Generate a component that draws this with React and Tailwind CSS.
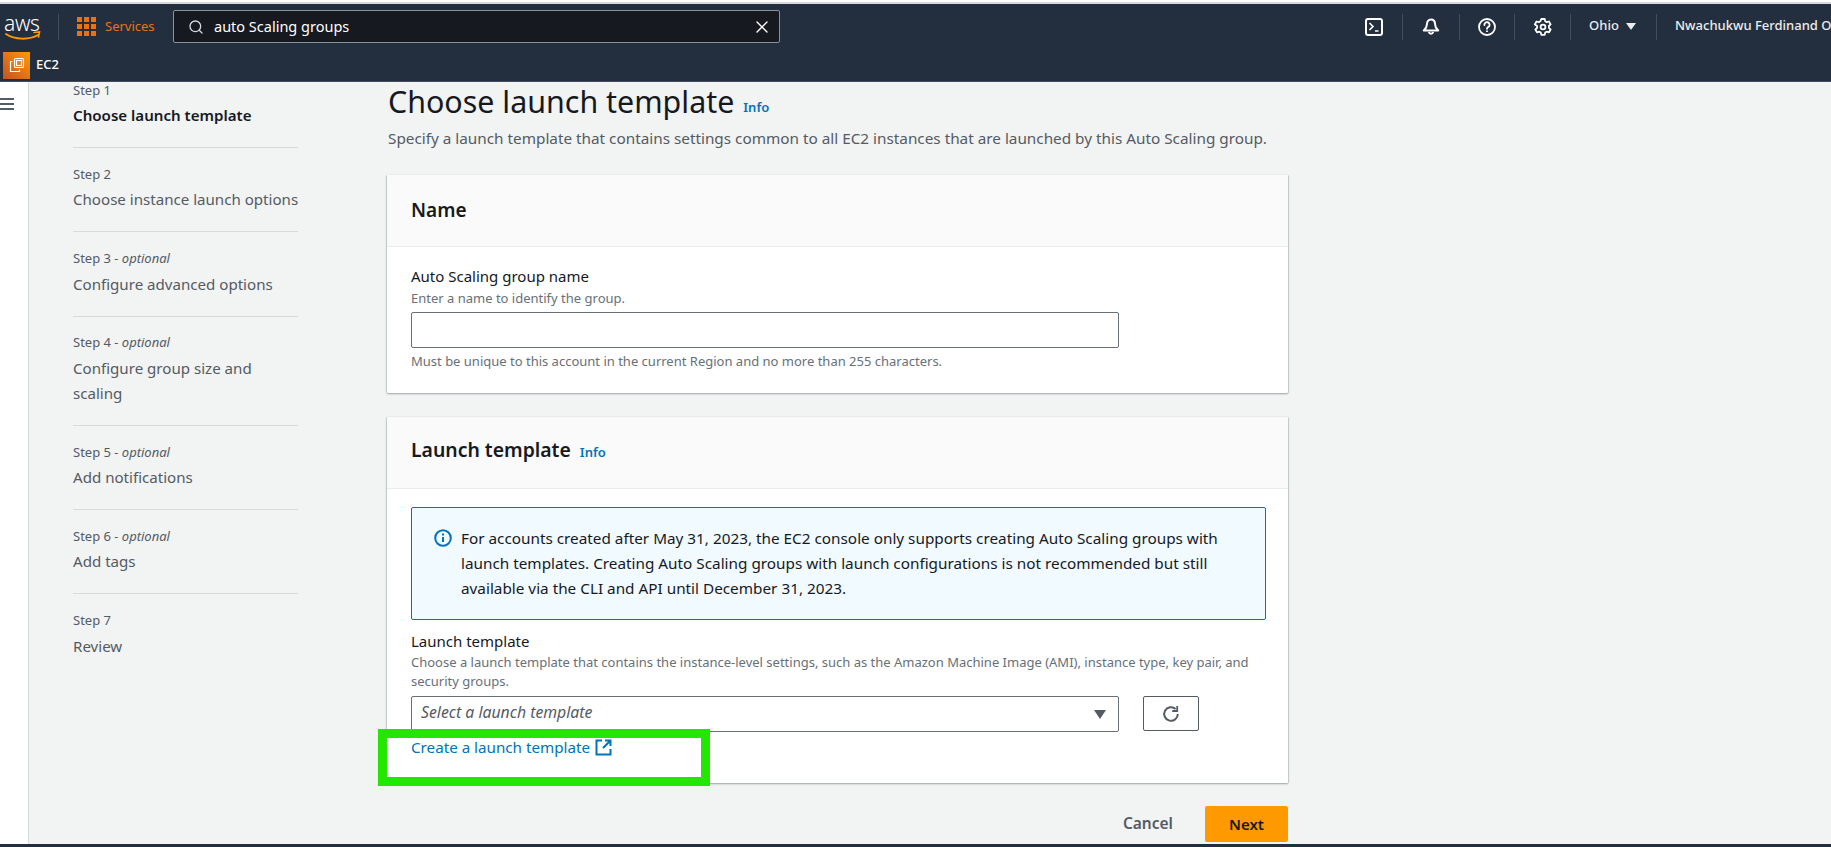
import { Search, X } from "lucide-react";

const FONT = "font-['Noto_Sans','Open_Sans',sans-serif]";

const steps = [
  { step: "Step 1", title: ["Choose launch template"], active: true },
  { step: "Step 2", title: ["Choose instance launch options"] },
  { step: "Step 3", optional: true, title: ["Configure advanced options"] },
  { step: "Step 4", optional: true, title: ["Configure group size and", "scaling"] },
  { step: "Step 5", optional: true, title: ["Add notifications"] },
  { step: "Step 6", optional: true, title: ["Add tags"] },
  { step: "Step 7", title: ["Review"], last: true },
];

function Divider() {
  return <div className="h-[26px] w-px bg-[#414d5c]" />;
}

function AwsLogo() {
  return (
    <div className="relative h-[30px] w-[40px]">
      <span className="ml-[2px] block text-[21px] font-light leading-[22px] tracking-[-0.3px] text-white">aws</span>
      <svg className="absolute left-[2px] top-[17px]" width="38" height="14" viewBox="0 0 38 14" fill="none">
        <path d="M2 5c9 6 23 6 32 1" stroke="#ff9900" strokeWidth="2" strokeLinecap="round" />
        <path d="M30 3.5l5.5-.5-1 5" stroke="#ff9900" strokeWidth="1.6" strokeLinecap="round" />
      </svg>
    </div>
  );
}

function ServicesGrid() {
  return (
    <div className="grid grid-cols-3 gap-[2px]">
      {[0, 1, 2, 3, 4, 5, 6, 7, 8].map((i) => (
        <div key={i} className="h-[5px] w-[5px] bg-[#ec7211]" />
      ))}
    </div>
  );
}

function HeaderIcons() {
  return (
    <div className="flex items-center text-white">
      <div className="flex w-[56px] justify-center">
        <svg width="18" height="18" viewBox="0 0 18 18" fill="none" stroke="currentColor" strokeWidth="2">
          <rect x="1" y="1" width="16" height="16" rx="2" />
          <path d="M4.5 5l3.5 3.5-3.5 3.5M10 13h3.5" strokeWidth="1.6" />
        </svg>
      </div>
      <Divider />
      <div className="flex w-[56px] justify-center">
        <svg width="18" height="18" viewBox="0 0 18 18" fill="none" stroke="currentColor" strokeWidth="2" strokeLinejoin="round">
          <path d="M9 1.5c-2.6 0-4 2-4 4.5 0 3-1.2 4.5-3.2 6.5h14.4c-2-2-3.2-3.5-3.2-6.5 0-2.5-1.4-4.5-4-4.5z" />
          <path d="M6.8 14a2.3 2.3 0 004.4 0" />
        </svg>
      </div>
      <Divider />
      <div className="flex w-[54px] justify-center">
        <svg width="18" height="18" viewBox="0 0 18 18" fill="none" stroke="currentColor" strokeWidth="1.8">
          <circle cx="9" cy="9" r="8" />
          <path d="M6.4 7a2.6 2.6 0 115 .8c-.4 1-2.4 1.3-2.4 3" strokeLinecap="round" />
          <path d="M9 12.6v1.4" />
        </svg>
      </div>
      <Divider />
      <div className="flex w-[55px] justify-center">
        <svg width="18" height="18" viewBox="0 0 18 18" fill="none" stroke="currentColor" strokeWidth="1.8" strokeLinejoin="round">
          <path d="M7.3 1h3.4l.5 2.3 1.5.9 2.3-.7 1.6 2.9-1.7 1.6v1.9l1.7 1.6-1.6 2.9-2.3-.7-1.5.9-.5 2.3H7.3l-.5-2.3-1.5-.9-2.3.7-1.6-2.9 1.7-1.6V8L.9 6.4l1.6-2.9 2.3.7 1.5-.9z" />
          <circle cx="9" cy="9" r="2.4" />
        </svg>
      </div>
      <Divider />
      <div className="flex w-[85px] items-center justify-center gap-[7px] pb-[2px] pr-[2px] text-[13px] font-medium text-[#eaeded]">
        <span>Ohio</span>
        <span className="mt-[2px] h-0 w-0 border-x-[5px] border-t-[7px] border-x-transparent border-t-[#eaeded]" />
      </div>
      <Divider />
    </div>
  );
}

function TopNav() {
  return (
    <header className="h-[78px] shrink-0 border-b border-[#414d5c] bg-[#232f3e]">
      <div className="flex h-[45px] items-center">
        <div className="ml-[2px] flex w-[56px] shrink-0 justify-start">
          <AwsLogo />
        </div>
        <div className="h-[26px] w-px shrink-0 bg-[#414d5c]" />
        <div className="ml-[18px] flex w-[96px] shrink-0 items-center gap-[9px]">
          <ServicesGrid />
          <span className="text-[13px] text-[#ec7211]">Services</span>
        </div>
        <div className="flex h-[33px] w-[607px] shrink-0 items-center rounded-[2px] border border-[#879596] bg-[#16191f] pl-[14px] pr-[7px] text-white">
          <Search size={16} strokeWidth={2} className="text-[#d5dbdb]" />
          <span className="ml-[10px] flex-1 text-[14.5px]">auto Scaling groups</span>
          <X size={20} strokeWidth={1.6} />
        </div>
        <div className="flex flex-1 items-center justify-end overflow-hidden">
          <HeaderIcons />
          <span className="ml-[18px] w-[156px] shrink-0 overflow-hidden whitespace-nowrap pb-[2px] text-[13px] font-medium text-[#eaeded]">
            Nwachukwu Ferdinand On
          </span>
        </div>
      </div>
      <div className="flex h-[32px] items-center pl-[3px]">
        <div className="flex h-[27px] w-[27px] items-center justify-center bg-linear-to-tr from-[#c8511b] to-[#ff9900]">
          <svg width="20" height="20" viewBox="0 0 20 20" fill="none" stroke="white" strokeWidth="1.2">
            <rect x="7.5" y="3.5" width="9" height="9" rx="1" />
            <rect x="9.5" y="5.5" width="5" height="5" />
            <path d="M5.5 6.5H3.5v10h9v-2" />
          </svg>
        </div>
        <span className="ml-[6px] text-[13px] font-medium text-white">EC2</span>
      </div>
    </header>
  );
}

function StepList() {
  return (
    <nav className="ml-[44px] mt-[-0.5px] w-[225px] shrink-0">
      {steps.map((s) => (
        <div key={s.step} className={s.last ? "" : "mb-[17.8px] border-b border-[#d5dbdb] pb-[19px]"}>
          <div className="text-[13px] leading-[16px] text-[#545b64]">
            {s.step}
            {s.optional && <i> - optional</i>}
          </div>
          <div className={`mt-[5.5px] whitespace-nowrap text-[15.1px] leading-[25px] ${s.active ? "font-semibold text-[#16191f]" : "text-[#545b64]"}`}>
            {s.title.map((line) => (
              <div key={line}>{line}</div>
            ))}
          </div>
        </div>
      ))}
    </nav>
  );
}

function Card({ header, children }) {
  return (
    <section className="w-[901px] rounded-[1px] bg-white shadow-[0_1px_2px_rgba(0,28,36,0.35),1px_0_1px_rgba(0,28,36,0.12),-1px_0_1px_rgba(0,28,36,0.12)]">
      <div className="flex h-[72px] items-center border-b border-[#eaeded] bg-[#fafafa] px-[24px]">{header}</div>
      {children}
    </section>
  );
}

function Main() {
  return (
    <main className="ml-[89px] w-[901px] shrink-0">
      <div className="flex items-end pt-[2px]">
        <h1 className="pl-[1px] text-[30.4px] leading-[36px] text-[#16191f]">Choose launch template</h1>
        <span className="mb-[3px] ml-[9px] text-[13px] font-semibold text-[#0073bb]">Info</span>
      </div>
      <p className="mt-[7px] whitespace-nowrap pl-[1px] text-[15.3px] leading-[22px] text-[#545b64]">
        Specify a launch template that contains settings common to all EC2 instances that are launched by this Auto Scaling group.
      </p>

      <div className="mt-[26px] flex flex-col gap-[24px]">
        <Card header={<h2 className="pb-[1px] text-[19px] font-semibold text-[#16191f]">Name</h2>}>
          <div className="h-[146px] px-[24px] pt-[19px]">
            <div className="text-[15px] leading-[20px] text-[#16191f]">Auto Scaling group name</div>
            <div className="mt-[3px] text-[13px] leading-[18px] text-[#687078]">Enter a name to identify the group.</div>
            <div className="mt-[5px] h-[36px] w-[708px] rounded-[2px] border border-[#687078] bg-white" />
            <div className="mt-[4px] text-[13px] leading-[18px] text-[#687078]">
              Must be unique to this account in the current Region and no more than 255 characters.
            </div>
          </div>
        </Card>

        <Card
          header={
            <div className="flex items-baseline pb-[5px]">
              <h2 className="text-[19.4px] font-semibold text-[#16191f]">Launch template</h2>
              <span className="ml-[9px] text-[13px] font-semibold text-[#0073bb]">Info</span>
            </div>
          }
        >
          <div className="h-[294px] px-[24px] pt-[18px]">
            <div className="flex h-[113px] w-[855px] gap-[9px] rounded-[2px] border border-[#0073bb] bg-[#f1faff] pl-[22px] pt-[18px]">
              <svg className="mt-[3px] shrink-0" width="18" height="18" viewBox="0 0 18 18" fill="none" stroke="#0073bb" strokeWidth="2">
                <circle cx="9" cy="9" r="7.8" />
                <path d="M9 8v5M9 4.6v2" />
              </svg>
              <p className="w-[790px] text-[15.3px] leading-[25px] text-[#16191f]">
                For accounts created after May 31, 2023, the EC2 console only supports creating Auto Scaling groups with launch templates. Creating Auto Scaling groups with launch configurations is not recommended but still available via the CLI and API until December 31, 2023.
              </p>
            </div>
            <div className="mt-[11px] text-[15px] leading-[20px] text-[#16191f]">Launch template</div>
            <div className="mt-[2px] text-[13px] leading-[18.5px] text-[#687078]">
              Choose a launch template that contains the instance-level settings, such as the Amazon Machine Image (AMI), instance type, key pair, and security groups.
            </div>
            <div className="mt-[6px] flex gap-[24px]">
              <div className="flex h-[36px] w-[708px] items-center justify-between rounded-[2px] border border-[#687078] bg-white pl-[9px] pr-[12px]">
                <i className="pb-[2px] text-[15.8px] text-[#545b64]">Select a launch template</i>
                <span className="h-0 w-0 border-x-[6px] border-t-[9px] border-x-transparent border-t-[#545b64]" />
              </div>
              <div className="flex h-[35px] w-[56px] items-center justify-center rounded-[2px] border border-[#545b64] bg-white">
                <svg width="18" height="18" viewBox="0 0 18 18" fill="none" stroke="#545b64" strokeWidth="2">
                  <path d="M15.8 9a6.8 6.8 0 11-2.2-5" />
                  <path d="M15.2 1v5h-5" strokeWidth="1.8" />
                </svg>
              </div>
            </div>
            <div className="mt-[5px] flex items-center gap-[5px] text-[15.2px] leading-[20px] text-[#0073bb]">
              <span>Create a launch template</span>
              <svg width="17" height="17" viewBox="0 0 17 17" fill="none" stroke="currentColor" strokeWidth="2">
                <path d="M7 1.5H1.5v14h14V10" />
                <path d="M10 1.5h5.5V7M15.5 1.5L8 9" />
              </svg>
            </div>
          </div>
        </Card>
      </div>

      <div className="mt-[23px] flex items-center justify-end">
        <span className="mr-[32px] text-[15.5px] font-semibold text-[#545b64]">Cancel</span>
        <div className="flex h-[36px] w-[83px] items-center justify-center rounded-[2px] bg-[#ff9900] text-[15px] font-semibold text-[#16191f]">Next</div>
      </div>
    </main>
  );
}

export default function App() {
  return (
    <div className={`${FONT} relative flex h-[847px] flex-col overflow-hidden bg-[#f2f3f3]`}>
      <div className="h-[4px] shrink-0 border-b-2 border-[#d8d8d8] bg-white" />
      <TopNav />
      <div className="flex min-h-0 flex-1">
        <div className="w-[29px] shrink-0 border-r border-[#d5dbdb] bg-white">
          <svg className="mt-[15px]" width="16" height="14" viewBox="0 0 16 14" fill="none" stroke="#545b64" strokeWidth="2">
            <path d="M0 2h14M0 7h14M0 12h14" />
          </svg>
        </div>
        <StepList />
        <Main />
      </div>
      <div className="h-[3px] shrink-0 bg-[#232f3e]" />
      {/* green highlight drawn over the screenshot */}
      <div className="absolute left-[378px] top-[729px] h-[57px] w-[332px] border-[9px] border-[#22e800]" />
    </div>
  );
}
